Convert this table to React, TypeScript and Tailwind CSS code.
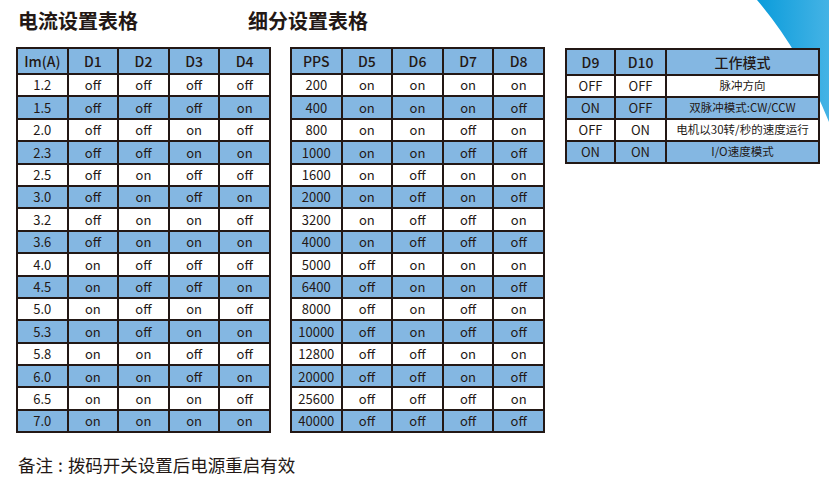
import React from 'react';

const BLUE = 'bg-[#84b7e2]';

const currentRows: string[][] = [
  ['1.2', 'off', 'off', 'off', 'off'],
  ['1.5', 'off', 'off', 'off', 'on'],
  ['2.0', 'off', 'off', 'on', 'off'],
  ['2.3', 'off', 'off', 'on', 'on'],
  ['2.5', 'off', 'on', 'off', 'off'],
  ['3.0', 'off', 'on', 'off', 'on'],
  ['3.2', 'off', 'on', 'on', 'off'],
  ['3.6', 'off', 'on', 'on', 'on'],
  ['4.0', 'on', 'off', 'off', 'off'],
  ['4.5', 'on', 'off', 'off', 'on'],
  ['5.0', 'on', 'off', 'on', 'off'],
  ['5.3', 'on', 'off', 'on', 'on'],
  ['5.8', 'on', 'on', 'off', 'off'],
  ['6.0', 'on', 'on', 'off', 'on'],
  ['6.5', 'on', 'on', 'on', 'off'],
  ['7.0', 'on', 'on', 'on', 'on'],
];

const ppsRows: string[][] = [
  ['200', 'on', 'on', 'on', 'on'],
  ['400', 'on', 'on', 'on', 'off'],
  ['800', 'on', 'on', 'off', 'on'],
  ['1000', 'on', 'on', 'off', 'off'],
  ['1600', 'on', 'off', 'on', 'on'],
  ['2000', 'on', 'off', 'on', 'off'],
  ['3200', 'on', 'off', 'off', 'on'],
  ['4000', 'on', 'off', 'off', 'off'],
  ['5000', 'off', 'on', 'on', 'on'],
  ['6400', 'off', 'on', 'on', 'off'],
  ['8000', 'off', 'on', 'off', 'on'],
  ['10000', 'off', 'on', 'off', 'off'],
  ['12800', 'off', 'off', 'on', 'on'],
  ['20000', 'off', 'off', 'on', 'off'],
  ['25600', 'off', 'off', 'off', 'on'],
  ['40000', 'off', 'off', 'off', 'off'],
];

const modeRows: string[][] = [
  ['OFF', 'OFF', '脉冲方向'],
  ['ON', 'OFF', '双脉冲模式:CW/CCW'],
  ['OFF', 'ON', '电机以30转/秒的速度运行'],
  ['ON', 'ON', 'I/O速度模式'],
];

function SwitchTable({ head, rows }: { head: string[]; rows: string[][] }) {
  return (
    <div className="grid w-[255px] grid-cols-5 gap-[2px] bg-[#231815] p-[2px]">
      {head.map((h) => (
        <div key={h} className={`${BLUE} flex h-[24px] items-center justify-center text-[14px] font-medium`}>
          {h}
        </div>
      ))}
      {rows.map((r, i) =>
        r.map((c, j) => (
          <div
            key={`${i}-${j}`}
            className={`${i % 2 ? BLUE : 'bg-white'} flex h-[20.4px] items-center justify-center text-[13px]`}
          >
            {c}
          </div>
        ))
      )}
    </div>
  );
}

export default function App() {
  return (
    <div className="relative h-[486px] w-[829px] overflow-hidden bg-white font-['Noto_Sans_CJK_SC','Noto_Sans',sans-serif] text-[#231815]">
      <svg className="absolute right-0 top-0" width="75" height="125" viewBox="754 0 75 125">
        <defs>
          <linearGradient id="corner" x1="0" y1="0" x2="1" y2="0">
            <stop offset="0" stopColor="#0a9cdb" />
            <stop offset="1" stopColor="#45b3e5" />
          </linearGradient>
        </defs>
        <path d="M757 0 Q800 50 829 122 L829 0 Z" fill="url(#corner)" />
      </svg>

      <div className="relative flex pl-[18px] pt-[7px] text-[20px] font-bold leading-[28px]">
        <span className="w-[230px]">电流设置表格</span>
        <span>细分设置表格</span>
      </div>

      <div className="relative mt-[12px] flex items-start gap-[19px] pl-[16px]">
        <SwitchTable head={['Im(A)', 'D1', 'D2', 'D3', 'D4']} rows={currentRows} />
        <SwitchTable head={['PPS', 'D5', 'D6', 'D7', 'D8']} rows={ppsRows} />

        <div className="ml-[1px] mt-[1px] grid w-[255px] grid-cols-[47px_49px_1fr] gap-[2px] bg-[#231815] p-[2px]">
          {['D9', 'D10', '工作模式'].map((h) => (
            <div key={h} className={`${BLUE} flex h-[24px] items-center justify-center text-[14px] font-medium`}>
              {h}
            </div>
          ))}
          {modeRows.map((r, i) =>
            r.map((c, j) => (
              <div
                key={`${i}-${j}`}
                className={`${i % 2 ? BLUE : 'bg-white'} flex h-[20px] items-center justify-center ${
                  j === 2 ? 'text-[11.5px]' : 'text-[13px]'
                }`}
              >
                {c}
              </div>
            ))
          )}
        </div>
      </div>

      <div className="pl-[18px] pt-[19px] text-[17.5px] leading-[26px]">
        备注<span className="mx-[5px]">:</span>拨码开关设置后电源重启有效
      </div>
    </div>
  );
}
